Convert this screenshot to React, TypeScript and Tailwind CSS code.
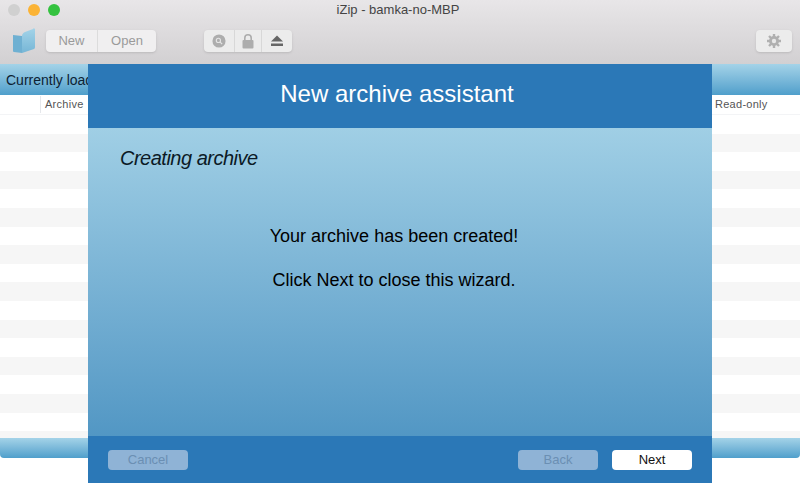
const rows = Array.from({ length: 18 }, (_, i) => i);

function Lock() {
  return (
    <svg viewBox="0 0 14 16" className="h-4 w-3.5" fill="#adadad">
      <path d="M3 7V5a4 4 0 0 1 8 0v2h-1.6V5a2.4 2.4 0 0 0-4.8 0v2z" />
      <rect x="1.5" y="7" width="11" height="8.5" rx="1" />
    </svg>
  );
}

function Search() {
  return (
    <svg viewBox="0 0 16 16" className="size-3.5">
      <circle cx="8" cy="8" r="7.5" fill="#adadad" />
      <circle cx="7.3" cy="7.3" r="2.4" fill="none" stroke="#e4e4e4" strokeWidth="1.3" />
      <path d="M9 9l2.6 2.6" stroke="#e4e4e4" strokeWidth="1.5" />
    </svg>
  );
}

function Eject() {
  return (
    <svg viewBox="0 0 14 12" className="h-3 w-3.5" fill="#666">
      <path d="M7 0.5L13 6.5H1z" />
      <rect x="1" y="8.5" width="12" height="2.5" />
    </svg>
  );
}

function Gear() {
  return (
    <svg viewBox="0 0 16 16" className="h-4 w-4">
      <g stroke="#b0b0b0" strokeWidth="2.4">
        <path d="M8 1v14M1 8h14M3 3l10 10M13 3L3 13" />
      </g>
      <circle cx="8" cy="8" r="5" fill="#b0b0b0" />
      <circle cx="8" cy="8" r="2.2" fill="#e8e8e8" />
    </svg>
  );
}

function Book() {
  return (
    <svg viewBox="0 0 24 26" className="h-6.5 w-6">
      <defs>
        <linearGradient id="pg" x1="0" y1="0" x2="0" y2="1">
          <stop offset="0" stopColor="#a3d3e8" />
          <stop offset="1" stopColor="#76b6d6" />
        </linearGradient>
      </defs>
      <path d="M1 7l9 1v17l-8-1a1 1 0 0 1-1-1z" fill="#6fb0d2" />
      <path d="M10 8c0-2 1-3 3-4l8-3a1 1 0 0 1 2 1v17a2 2 0 0 1-1 2l-12 4z" fill="url(#pg)" />
    </svg>
  );
}

export default function App() {
  return (
    <div className="relative flex h-[483px] w-[800px] flex-col overflow-hidden bg-white font-['Liberation_Sans',sans-serif]">
      <div className="flex h-16 flex-col bg-gradient-to-b from-[#e8e6e8] to-[#d2d0d2] px-2 pt-0.5">
        <div className="relative flex h-4 items-center gap-2">
          <span className="size-3 rounded-full bg-[#d0d0d0]" />
          <span className="size-3 rounded-full bg-[#fbb335]" />
          <span className="size-3 rounded-full bg-[#34c23f]" />
          <span className="absolute inset-x-0 pr-1 text-center text-[13px] text-[#444]">iZip - bamka-no-MBP</span>
        </div>
        <div className="mt-2.5 flex items-center">
          <div className="ml-1"><Book /></div>
          <div className="ml-2.5 flex h-5.5 items-center rounded bg-[#f0eff0] text-[13px] text-[#9a9a9a] shadow-sm">
            <span className="flex h-full w-13 items-center justify-center border-r border-[#dcdcdc]">New</span>
            <span className="flex h-full w-14.5 items-center justify-center">Open</span>
          </div>
          <div className="ml-12 flex h-5.5 items-center rounded bg-[#ececec] shadow-sm">
            <span className="flex h-full items-center border-r border-[#d8d8d8] px-2"><Search /></span>
            <span className="flex h-full items-center border-r border-[#d8d8d8] px-1.5"><Lock /></span>
            <span className="flex h-full items-center px-2"><Eject /></span>
          </div>
          <div className="ml-auto flex h-5.5 w-9 items-center justify-center rounded bg-[#ececec] shadow-sm">
            <Gear />
          </div>
        </div>
      </div>

      <div className="flex h-7.75 items-center bg-gradient-to-b from-[#a4d3e8] to-[#4f9fcb] px-1.5 text-sm text-[#0d2233]">
        Currently loaded archives
      </div>
      <div className="flex h-5 items-center border-b border-gray-100 text-[11px] tracking-wide text-[#555]">
        <span className="ml-10 border-l border-gray-200 pl-1">Archive</span>
        <span className="ml-auto w-[85px]">Read-only</span>
      </div>
      <div className="flex h-[323px] flex-col overflow-hidden">
        {rows.map((r) => (
          <div key={r} className={r % 2 === 0 ? "h-[18.6px] shrink-0 bg-white" : "h-[18.6px] shrink-0 bg-[#f6f6f6]"} />
        ))}
      </div>
      <div className="h-5 rounded-b bg-gradient-to-b from-[#a4d3e8] to-[#4f9fcb]" />

      <div className="absolute top-16 bottom-0 left-22 flex w-156 flex-col">
        <div className="flex h-16 shrink-0 items-center justify-center bg-[#2b78b7] pr-1.5 pb-1 text-2xl text-white">
          New archive assistant
        </div>
        <div className="flex flex-1 flex-col bg-gradient-to-b from-[#a0cfe5] to-[#5297c4] text-black">
          <p className="mt-4 ml-8 text-xl tracking-tight italic text-[#0b1a26]">Creating archive</p>
          <p className="mt-12.5 pr-3 text-center text-lg">Your archive has been created!</p>
          <p className="mt-4 pr-3 text-center text-lg">Click Next to close this wizard.</p>
        </div>
        <div className="flex h-11.75 shrink-0 items-center gap-3.5 bg-[#2b78b7] px-5 text-[13px]">
          <span className="flex h-5 w-20 items-center justify-center rounded-sm bg-[#8fb3d6] text-[#6b8fb3]">Cancel</span>
          <span className="ml-auto flex h-5 w-20 items-center justify-center rounded-sm bg-[#8fb3d6] text-[#6b8fb3]">Back</span>
          <span className="flex h-5 w-20 items-center justify-center rounded-sm bg-white text-[#111]">Next</span>
        </div>
      </div>
    </div>
  );
}
